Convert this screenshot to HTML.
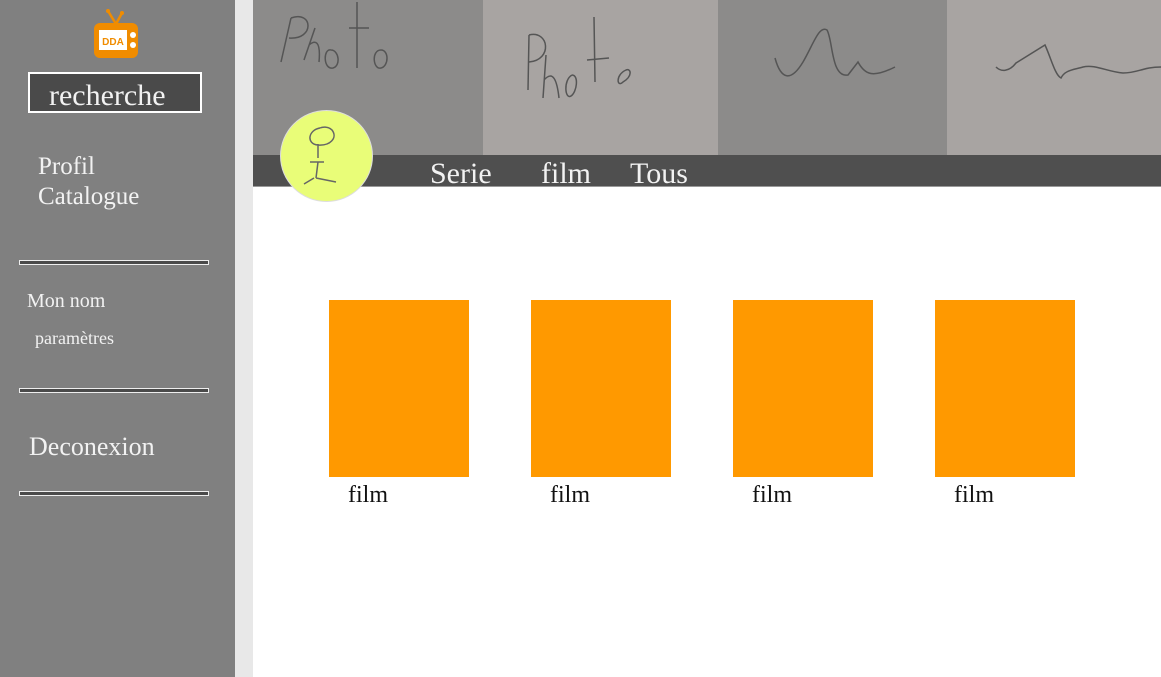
<!DOCTYPE html>
<html><head><meta charset="utf-8"><style>
*{margin:0;padding:0;box-sizing:border-box}
body{width:1161px;height:677px;position:relative;overflow:hidden;background:#fff;font-family:"Liberation Serif",serif}
.a{position:absolute}
.side{left:0;top:0;width:235px;height:677px;background:#808080}
.strip{left:235px;top:0;width:18px;height:677px;background:#e8e8e8}
.t{color:#f2f2f2;white-space:nowrap}
.line{left:19px;width:190px;height:5px;border:1px solid #eee;background:#4a4a4a}
.card{top:300px;width:140px;height:177px;background:#ff9900}
.lab{top:482px;font-size:24px;color:#111}
</style></head><body>
<div class="a side"></div>
<div class="a strip"></div>
<svg class="a" style="left:92px;top:8px" width="48" height="52" viewBox="0 0 48 52">
<path d="M16 3 L24 16 L30 5" stroke="#f08c00" stroke-width="2.5" fill="none"/>
<circle cx="16" cy="3" r="2" fill="#f08c00"/><circle cx="30" cy="5" r="2" fill="#f08c00"/>
<rect x="2" y="15" width="44" height="35" rx="6" fill="#f08c00"/>
<rect x="7" y="22" width="28" height="20" fill="#fff"/>
<text x="21" y="37" font-size="10" font-family="Liberation Sans" font-weight="bold" fill="#f08c00" text-anchor="middle">DDA</text>
<circle cx="41" cy="27" r="3" fill="#fff"/><circle cx="41" cy="37" r="3" fill="#fff"/>
</svg>
<div class="a" style="left:28px;top:72px;width:174px;height:41px;background:#4a4a4a;border:2px solid #fff"></div>
<div class="a t" style="left:49px;top:79px;font-size:30px">recherche</div>
<div class="a t" style="left:38px;top:152px;font-size:25px;line-height:30px">Profil<br>Catalogue</div>
<div class="a line" style="top:260px"></div>
<div class="a t" style="left:27px;top:290px;font-size:20px">Mon nom</div>
<div class="a t" style="left:35px;top:328px;font-size:18px">paramètres</div>
<div class="a line" style="top:388px"></div>
<div class="a t" style="left:29px;top:432px;font-size:26px">Deconexion</div>
<div class="a line" style="top:491px"></div>

<div class="a" style="left:253px;top:0;width:230px;height:155px;background:#8c8b8a"></div>
<div class="a" style="left:483px;top:0;width:235px;height:155px;background:#a8a4a2"></div>
<div class="a" style="left:718px;top:0;width:229px;height:155px;background:#8c8b8a"></div>
<div class="a" style="left:947px;top:0;width:214px;height:155px;background:#a8a4a2"></div>
<svg class="a" style="left:253px;top:0" width="908" height="155" fill="none" stroke="#555" stroke-width="1.5">
<path d="M28 62 L38 18 M38 18 C60 10 62 40 36 38 M51 60 L62 28 M56 45 C62 40 68 40 66 62 M78 50 C70 48 70 70 80 68 C88 66 86 50 78 50 M104 2 L104 68 M96 28 L116 28 M128 50 C118 50 120 70 128 68 C136 66 136 50 128 50"/>
<path d="M275 90 L276 35 M276 35 C296 30 300 60 276 62 M290 98 L293 55 M291 80 C300 70 304 80 306 98 M319 75 C310 80 312 100 318 96 C324 92 326 75 319 75 M341 17 L342 82 M334 60 L356 58 M373 70 C362 75 364 88 370 82 C380 76 378 68 373 70"/>
<path d="M522 58 C528 80 538 82 550 62 C560 45 566 25 574 30 C580 40 578 78 595 75 L605 62 C612 75 620 78 642 67"/>
<path d="M743 67 C748 72 756 72 763 63 L792 45 C798 58 802 75 808 78 C812 70 820 70 830 67 C842 64 855 72 870 73 C885 73 890 67 908 67"/>
</svg>
<div class="a" style="left:253px;top:155px;width:908px;height:32px;background:#4f4f4f;border-bottom:1px solid #999"></div>
<div class="a t" style="left:430px;top:157px;font-size:30px">Serie</div>
<div class="a t" style="left:541px;top:157px;font-size:30px">film</div>
<div class="a t" style="left:630px;top:157px;font-size:30px">Tous</div>
<div class="a" style="left:280px;top:110px;width:93px;height:92px;border-radius:50%;background:#e9fd78;border:1px solid #ddd"></div>
<svg class="a" style="left:280px;top:110px" width="93" height="92" fill="none" stroke="#666" stroke-width="1.5">
<path d="M40 18 C28 20 26 34 38 35 C50 36 58 28 52 20 C48 16 42 17 40 18 M38 34 L38 48 M30 52 L44 52 M38 52 L36 68 M34 68 L24 74 M36 68 L56 72"/>
</svg>

<div class="a card" style="left:329px"></div>
<div class="a card" style="left:531px"></div>
<div class="a card" style="left:733px"></div>
<div class="a card" style="left:935px"></div>
<div class="a lab" style="left:348px">film</div>
<div class="a lab" style="left:550px">film</div>
<div class="a lab" style="left:752px">film</div>
<div class="a lab" style="left:954px">film</div>
</body></html>
